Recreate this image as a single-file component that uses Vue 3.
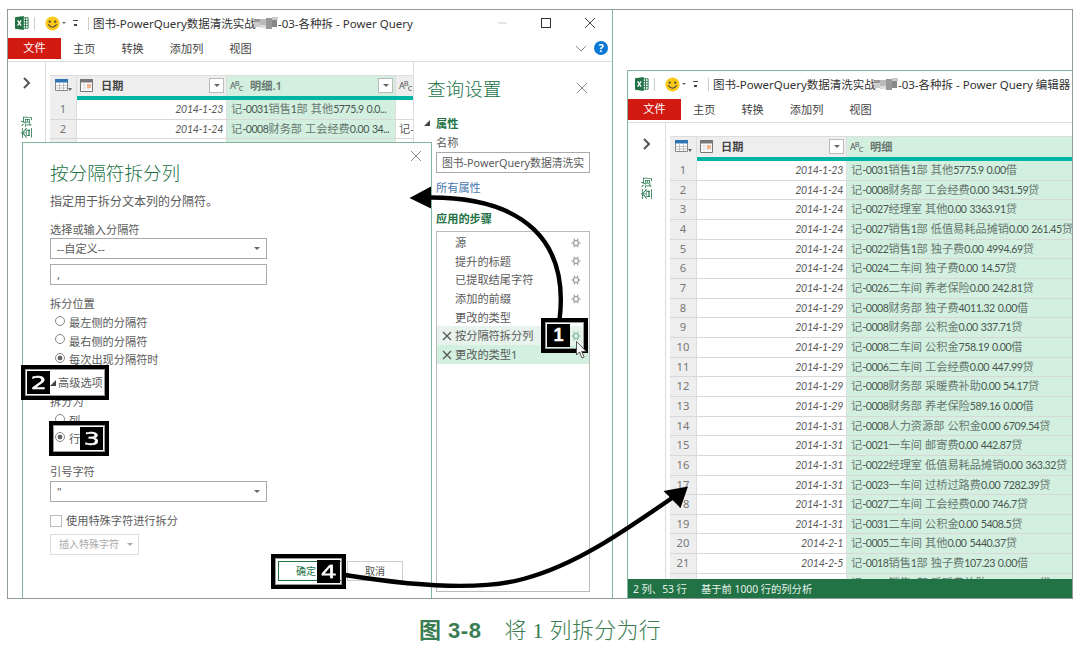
<template>
  <div class="figure">
    <div class="frame"></div>

    <section v-for="win in windows" :key="win.name" class="window" :class="win.name">
      <header class="titlebar">
        <svg class="excel" viewBox="0 0 16 16"><path d="M8 2h7v12H8z" fill="#fff" stroke="#217346" /><path d="M9 5h6M9 8h6M9 11h6M12 2v12" stroke="#217346" /><path d="M0 1.500 10 0v16L0 14.500z" fill="#217346" /><path d="m3 5 4 6M7 5l-4 6" stroke="#fff" stroke-width="1.500" /></svg>
        <i class="sep"></i>
        <svg class="smile" viewBox="0 0 16 16"><circle cx="8" cy="8" r="7.500" fill="#fcc916" /><circle cx="5" cy="6" r="1.200" fill="#444" /><circle cx="11" cy="6" r="1.200" fill="#444" /><path d="M3.500 9q4.500 6 9 0" fill="none" stroke="#444" stroke-width="1.200" /></svg>
        <i class="caret small"></i>
        <i class="quick"></i>
        <i class="sep last"></i>
        <span class="caption-text">图书-PowerQuery数据清洗实战</span>
        <svg class="mosaic" viewBox="0 0 24 12"><path d="M0 2h6v3H0z" fill="#999" /><path d="M6 2h6v6H6z" fill="#bbb" /><path d="M0 5h6v5H0zM18 0h6v3h-6z" fill="#ccc" /><path d="M12 1h6v11h-6z" fill="#999" /><path d="M18 3h5v7h-5z" fill="#888" /><path d="M6 8h6v3H6z" fill="#ddd" /></svg>
        <span class="caption-text tail">{{ win.tail }}</span>
        <svg v-if="win.settings" class="controls" viewBox="0 0 98 12"><path d="M0 6h9" stroke="#ccc" /><rect x="43.500" y="1.500" width="9" height="9" fill="none" stroke="#333" /><path d="m87 1 10 10M97 1 87 11" stroke="#444" /></svg>
      </header>
      <nav class="ribbon">
        <b>文件</b><span v-for="tab in tabs" :key="tab">{{ tab }}</span>
        <svg v-if="win.settings" class="help" viewBox="0 0 34 14"><path d="m1 5 5 5 5-5" fill="none" stroke="#888" /><circle cx="26" cy="7" r="7" fill="#0b78d7" /><text x="26" y="11" text-anchor="middle">?</text></svg>
      </nav>
      <div class="body">
        <aside class="rail"><svg viewBox="0 0 8 12"><path d="m1 1 5 5-5 5" fill="none" stroke="#555" stroke-width="2" /></svg><span>查询</span></aside>
        <div class="grid">
          <div class="row head">
            <span class="num"><svg class="table-icon" viewBox="0 0 17 14"><path d="M.5.500h12v11H.5z" fill="#fff" stroke="#888" /><path d="M0 0h13v3.500H0z" fill="#2f75b5" /><path d="M1 6.500h11M1 9h11M4.500 4v7M8.500 4v7" stroke="#aaa" stroke-width=".7" /><path d="M13 9h4l-2 3z" fill="#666" /></svg></span>
            <span class="date"><svg class="cal" viewBox="0 0 13 13"><path d="M.5.500h12v12H.5z" fill="#fff" stroke="#777" /><path d="M0 0h13v3.500H0z" fill="#777" /><path d="M1 6h11M1 9h11M4 4v8M8 4v8" stroke="#ccc" stroke-width=".6" /><path d="M7 5h4v4H7z" fill="#f2b58c" /></svg>日期<i class="drop"></i></span>
            <span class="text"><em class="abc">A<sup>B</sup><sub>C</sub></em>{{ win.column }}<i v-if="win.settings" class="drop"></i></span>
            <span v-if="win.settings" class="extra"><em class="abc">A<sup>B</sup><sub>C</sub></em></span>
          </div>
          <div class="quality"></div>
          <div v-for="(row, i) in win.rows" :key="i" class="row">
            <span class="num">{{ i < 21 ? i + 1 : "" }}</span>
            <span class="date">{{ row[0] }}</span>
            <span class="text"><template v-for="(part, k) in split(row[1])" :key="k"><em v-if="k % 2">{{ part }}</em><template v-else>{{ part }}</template></template></span>
            <span v-if="win.settings" class="extra">{{ row[2] }}</span>
          </div>
        </div>
        <aside v-if="win.settings" class="settings">
          <h2>查询设置<svg viewBox="0 0 12 12"><path d="m1 1 10 10M11 1 1 11" stroke="#888" /></svg></h2>
          <h3 class="props">属性</h3>
          <label>名称</label>
          <div class="name-box">图书-PowerQuery数据清洗实</div>
          <a>所有属性</a>
          <h3>应用的步骤</h3>
          <ul>
            <li v-for="(step, i) in steps" :key="step" :class="{ hover: i === 5, active: i === 6 }">
              <svg v-if="i > 4" class="remove" viewBox="0 0 10 10"><path d="m1 1 8 8M9 1 1 9" stroke="#555" stroke-width="1.300" /></svg>
              <span>{{ step }}</span>
              <svg v-if="i < 4 || i === 5" class="gear" viewBox="0 0 12 12"><circle cx="6" cy="6" r="3" /><path d="M4 .8v2.500M8 .8v2.500M4 8.700v2.500M8 8.700v2.500M.5 6H3M9 6h2.500" /></svg>
            </li>
          </ul>
        </aside>
      </div>
      <footer v-if="!win.settings" class="status"><span>2 列、53 行</span><span>基于前 1000 行的列分析</span></footer>
    </section>

    <section class="dialog">
      <svg class="close" viewBox="0 0 12 12"><path d="m1 1 10 10M11 1 1 11" stroke="#888" /></svg>
      <h1>按分隔符拆分列</h1>
      <p class="intro">指定用于拆分文本列的分隔符。</p>
      <label>选择或输入分隔符</label>
      <div class="field">--自定义--<i class="caret"></i></div>
      <div class="field second">,</div>
      <p class="line position">拆分位置</p>
      <p class="line option"><i class="radio"></i>最左侧的分隔符</p>
      <p class="line option"><i class="radio"></i>最右侧的分隔符</p>
      <p class="line option"><i class="radio on"></i>每次出现分隔符时</p>
      <p class="line advanced"><i class="tri"></i>高级选项</p>
      <p class="line">拆分为</p>
      <p class="line option"><i class="radio"></i>列</p>
      <p class="line option"><i class="radio on"></i>行</p>
      <p class="line quote">引号字符</p>
      <div class="field">"<i class="caret"></i></div>
      <p class="line special"><i class="check"></i>使用特殊字符进行拆分</p>
      <div class="insert">插入特殊字符<i class="caret"></i></div>
      <footer><button class="ok">确定</button><button>取消</button></footer>
    </section>

    <!-- arrows linking the numbered steps -->
    <svg class="arrows" viewBox="0 0 1080 648">
      <path class="stroke" d="M559.500 320C569 243 526 197 429 197.500M345 575C395 583 475 593 525 578.500C575 565 620 534 672 498" />
      <path d="M409.500 198 431 186.500V208.500zM688 486.500 663.500 491 680.500 508z" />
    </svg>
    <div v-for="n in 4" :key="n" class="callout" :class="'step' + n"><b><span>{{ n }}</span></b></div>
    <svg class="arrows" viewBox="0 0 1080 648"><path class="pointer" d="M576.500 341.500V355l3-3 2.500 6 2.200-1-2.500-5.500h4.500z" /></svg>

    <p class="figcaption"><b>图 3-8</b><span>将 1 列拆分为行</span></p>
  </div>
</template>

<script setup>
const tabs = ["主页", "转换", "添加列", "视图"];

const steps = ["源", "提升的标题", "已提取结尾字符", "添加的前缀", "更改的类型", "按分隔符拆分列", "更改的类型1"];

const leftRows = [
  ["2014-1-23", "记-0031销售1部 其他5775.9 0.0...", ""],
  ["2014-1-24", "记-0008财务部 工会经费0.00 34...", "记-"],
  ["2014-1-24", "记-0027经理室 其他0.00 3363...", ""],
];

const rows = [
  ["2014-1-23", "记-0031销售1部 其他5775.9 0.00借"],
  ["2014-1-24", "记-0008财务部 工会经费0.00 3431.59贷"],
  ["2014-1-24", "记-0027经理室 其他0.00 3363.91贷"],
  ["2014-1-24", "记-0027销售1部 低值易耗品摊销0.00 261.45贷"],
  ["2014-1-24", "记-0022销售1部 独子费0.00 4994.69贷"],
  ["2014-1-24", "记-0024二车间 独子费0.00 14.57贷"],
  ["2014-1-24", "记-0026二车间 养老保险0.00 242.81贷"],
  ["2014-1-29", "记-0008财务部 独子费4011.32 0.00借"],
  ["2014-1-29", "记-0008财务部 公积金0.00 337.71贷"],
  ["2014-1-29", "记-0008二车间 公积金758.19 0.00借"],
  ["2014-1-29", "记-0006二车间 工会经费0.00 447.99贷"],
  ["2014-1-29", "记-0008财务部 采暖费补助0.00 54.17贷"],
  ["2014-1-29", "记-0008财务部 养老保险589.16 0.00借"],
  ["2014-1-31", "记-0008人力资源部 公积金0.00 6709.54贷"],
  ["2014-1-31", "记-0021一车间 邮寄费0.00 442.87贷"],
  ["2014-1-31", "记-0022经理室 低值易耗品摊销0.00 363.32贷"],
  ["2014-1-31", "记-0023一车间 过桥过路费0.00 7282.39贷"],
  ["2014-1-31", "记-0027二车间 工会经费0.00 746.7贷"],
  ["2014-1-31", "记-0031二车间 公积金0.00 5408.5贷"],
  ["2014-2-1", "记-0005二车间 其他0.00 5440.37贷"],
  ["2014-2-5", "记-0018销售1部 独子费107.23 0.00借"],
  ["", "记-0018销售1部 采暖费补助0.00 354.17贷"],
];

const windows = [
  { name: "source", tail: "-03-各种拆 - Power Query", column: "明细.1", rows: leftRows, settings: true },
  { name: "result", tail: "-03-各种拆 - Power Query 编辑器", column: "明细", rows, settings: false },
];

// odd parts are the latin runs, set in a narrower face
const split = (text) => text.split(/([\x20-\x7e]+)/);
</script>

<style>
body {
  background: #fff;
}
</style>

<style scoped>
* {
  box-sizing: border-box;
}

.figure {
  position: relative;
  width: 1080px;
  height: 648px;
  overflow: hidden;
  background: #fff;
  color: #5a5a5a;
  font: 11.2px/19px "Noto Sans", "Noto Sans CJK SC", sans-serif;
  white-space: nowrap;
}

.frame {
  position: absolute;
  left: 7px;
  top: 9px;
  width: 1066px;
  height: 590px;
  border: 1px solid #8f9c97;
}

p, h1, h2, h3, ul {
  margin: 0;
  padding: 0;
  font-weight: 400;
}

svg {
  display: block;
  flex: none;
}

/* windows */
.window {
  position: absolute;
  display: flex;
  flex-direction: column;
  overflow: hidden;
  background: #fff;
}

.source {
  left: 8px;
  top: 10px;
  width: 605px;
  height: 588px;
  border-right: 1px solid #83b79d;
}

.result {
  left: 627px;
  top: 70px;
  width: 445px;
  height: 528px;
  border-left: 1px solid #83b79d;
  border-top: 1px solid #83b79d;
}

.titlebar {
  display: flex;
  align-items: center;
  flex: none;
  height: 28px;
  padding: 0 0 2px 6px;
  color: #333;
  font-size: 11.5px;
}

.excel {
  width: 16px;
  height: 14px;
}

.sep {
  width: 1px;
  height: 13px;
  margin-left: 4px;
  background: #ccc;
}

.sep.last {
  margin-left: 10px;
}

.smile {
  width: 15px;
  height: 15px;
  margin-left: 10px;
}

.caret {
  border: 3px solid transparent;
  border-top: 3px solid #666;
  border-bottom: 0;
}

.caret.small {
  margin-left: 2px;
  border-width: 2.5px 2.5px 0;
}

.quick {
  width: 5px;
  height: 6px;
  margin-left: 7px;
  border-top: 1px solid #444;
  background: linear-gradient(#444, #444) 50% 100% / 3px 2px no-repeat;
}

.caption-text {
  width: 161px;
  margin-left: 4px;
}

.mosaic {
  width: 24px;
  height: 12px;
  filter: blur(0.7px);
}

.caption-text.tail {
  width: auto;
  margin-left: 0;
}

.controls {
  width: 98px;
  height: 12px;
  margin-left: auto;
  margin-right: 16px;
}

.ribbon {
  display: flex;
  flex: none;
  gap: 26px;
  height: 24px;
  border-bottom: 1px solid #ddd;
  color: #444;
  line-height: 21px;
}

.ribbon b {
  width: 53px;
  height: 21px;
  margin-right: -14px;
  background: #d01a12;
  color: #fff;
  font-weight: 400;
  line-height: 20px;
  text-align: center;
}

.help {
  width: 34px;
  height: 14px;
  margin: 3px 3px 0 auto;
}

.help text {
  fill: #fff;
  font: bold 11px "Noto Sans", sans-serif;
}

.body {
  display: flex;
  flex: 1;
  min-height: 0;
}

.rail {
  display: flex;
  flex-direction: column;
  align-items: center;
  flex: none;
  gap: 27px;
  width: 38px;
  padding-top: 15px;
  border-right: 1px solid #ddd;
}

.rail svg {
  width: 8px;
  height: 12px;
}

.rail span {
  color: #217346;
  transform: rotate(180deg);
  writing-mode: vertical-rl;
  text-orientation: sideways;
}

/* data preview */
.grid {
  flex: 1;
  min-width: 0;
  margin-left: 4px;
  padding-top: 13px;
  overflow: hidden;
}

.row {
  display: flex;
  height: 19.67px;
  line-height: 18px;
}

.row > span {
  flex: none;
  border-right: 1px solid #ddd;
  border-bottom: 1px solid #d8d8d8;
  overflow: hidden;
}

.row .num {
  width: 27px;
  background: #eee;
  color: #777;
  text-align: center;
}

.row .date {
  width: 150px;
  padding-right: 3px;
  font-family: Lato, "Noto Sans CJK SC", sans-serif;
  font-size: 10.6px;
  font-style: italic;
  letter-spacing: -0.3px;
  text-align: right;
}

.row .text {
  width: 169px;
  padding-left: 4px;
  background: #d2efdf;
  color: #68776f;
}

.text em {
  color: #4a5750;
  font-family: Lato, sans-serif;
  font-size: 10.6px;
  font-style: normal;
  letter-spacing: -0.45px;
  word-spacing: 0.7px;
}

.result .row .text {
  width: 226px;
}

.row .extra {
  width: 20px;
  padding-left: 3px;
}

.row.head {
  height: 21px;
  border-top: 1px solid #ddd;
  background: #eee;
  color: #444;
  font-weight: 600;
}

.row.head > span {
  display: flex;
  align-items: center;
  padding: 0 2px 1px 3px;
  border-bottom: 0;
  font-size: 11.2px;
  font-style: normal;
  letter-spacing: 0;
}

.table-icon {
  width: 17px;
  height: 14px;
  margin-left: 2px;
}

.cal {
  width: 13px;
  height: 13px;
  margin-right: 8px;
}

.drop {
  width: 15px;
  height: 15px;
  margin-left: auto;
  border: 1px solid #bbb;
  background: #fff;
}

.drop::after {
  content: "";
  display: block;
  width: 0;
  margin: 5px 0 0 3.5px;
  border: 3px solid transparent;
  border-top-color: #666;
  border-bottom: 0;
}

.head .abc {
  display: inline-flex;
  flex: none;
  width: 20px;
  height: 16px;
  color: #555;
  font: 9px/16px "Noto Sans", sans-serif;
  letter-spacing: -0.9px;
}

.abc sup,
.abc sub {
  font-size: 7.5px;
  line-height: 11px;
}

.abc sub {
  line-height: 20px;
}

.quality {
  height: 4px;
  background: linear-gradient(90deg, #eee 27px, #00b5a3 27px);
}

.status {
  display: flex;
  flex: none;
  gap: 14px;
  height: 19px;
  padding-left: 5px;
  background: #217346;
  color: #e8f2ec;
  font-size: 10.3px;
  line-height: 21px;
}

/* query settings */
.settings {
  flex: none;
  width: 199px;
  padding: 10px 23px 5px 22px;
  border-left: 1px solid #ddd;
  background: #fff;
}

.settings h2 {
  display: flex;
  align-items: center;
  justify-content: space-between;
  height: 32px;
  margin-left: -9px;
  color: #217346;
  font-size: 18.6px;
  font-weight: 300;
}

.settings h2 svg {
  width: 12px;
  height: 12px;
  margin-right: 1px;
}

.settings h3 {
  color: #217346;
  font-size: 11.2px;
  font-weight: 700;
}

.settings .props {
  margin-top: 10px;
}

.props::before {
  content: "";
  float: left;
  margin: 6px 0 0 -12px;
  border-left: 6px solid transparent;
  border-bottom: 6px solid #444;
}

.settings label {
  display: block;
  height: 19px;
}

.name-box {
  width: 154px;
  height: 21px;
  padding-left: 5px;
  border: 1px solid #aaa;
  overflow: hidden;
  font-size: 10.8px;
  line-height: 20px;
}

.settings a {
  display: block;
  margin: 5px 0 12px;
  color: #4777ad;
}

.settings ul {
  width: 154px;
  height: 361px;
  margin-top: 3px;
  padding-top: 1px;
  border: 1px solid #bbb;
  list-style: none;
}

li {
  display: grid;
  grid-template-columns: 18px 1fr 18px;
  align-items: center;
  height: 18.7px;
}

li span {
  grid-column: 2;
  grid-row: 1;
}

li.hover {
  background: #e8f3ed;
}

li.active {
  background: #d2efdf;
}

.remove {
  width: 10px;
  height: 10px;
  margin-left: 5px;
}

.gear {
  grid-column: 3;
  width: 10px;
  height: 10px;
  fill: none;
  stroke: #999;
  stroke-width: 1.4;
}

.hover .gear {
  stroke: #7fb8a0;
}

/* split column dialog */
.dialog {
  position: absolute;
  left: 22px;
  top: 142px;
  width: 410px;
  height: 456px;
  padding: 17px 27px 0;
  border: 1px solid #83b79d;
  border-bottom: 0;
  background: #fff;
}

.close {
  position: absolute;
  top: 7px;
  right: 9px;
  width: 12px;
  height: 12px;
}

.dialog h1 {
  height: 28px;
  color: #217346;
  font-size: 18.6px;
  font-weight: 300;
  line-height: 26px;
}

.intro {
  height: 28px;
  font-size: 12px;
  line-height: 28px;
}

.dialog label {
  display: block;
  height: 22px;
  padding-top: 4px;
}

.field {
  display: flex;
  align-items: center;
  justify-content: space-between;
  width: 217px;
  height: 21px;
  padding: 0 6px;
  border: 1px solid #aaa;
}

.second {
  margin-top: 5px;
}

.line {
  display: flex;
  align-items: center;
  height: 18.8px;
}

.position {
  margin-top: 9px;
}

.option {
  padding-left: 5px;
}

.radio {
  width: 10px;
  height: 10px;
  margin: -3px 4px 0 0;
  border: 1px solid #888;
  border-radius: 50%;
}

.radio.on {
  background: radial-gradient(#666 2.1px, transparent 2.7px);
}

.advanced {
  margin-top: 4px;
}

.tri {
  margin-right: 2px;
  border-left: 6px solid transparent;
  border-bottom: 6px solid #444;
}

.quote {
  margin-top: 14px;
}

.special {
  margin-top: 9px;
}

.check {
  width: 12px;
  height: 12px;
  margin-right: 4px;
  border: 1px solid #bbb;
}

.insert {
  display: flex;
  align-items: center;
  gap: 8px;
  width: 89px;
  height: 21px;
  margin-top: 4px;
  padding-left: 8px;
  border: 1px solid #ddd;
  color: #aaa;
  font-size: 10px;
}

.insert .caret {
  border-top-color: #aaa;
}

.dialog footer {
  display: flex;
  gap: 2px;
  margin: 6px 0 0 228px;
}

button {
  width: 56px;
  height: 20px;
  padding: 0;
  border: 1px solid #ccc;
  background: #fff;
  color: #505050;
  font: 10px "Noto Sans CJK SC", sans-serif;
}

button.ok {
  width: 67px;
  padding-right: 11px;
  border-color: #217346;
  color: #217346;
}

/* numbered callouts */
.arrows {
  position: absolute;
  left: 0;
  top: 0;
  width: 1080px;
  height: 648px;
}

.arrows .stroke {
  fill: none;
  stroke: #000;
  stroke-width: 4.4;
}

.arrows .pointer {
  fill: #fff;
  stroke: #444;
  stroke-width: 0.9;
}

.callout {
  position: absolute;
  display: flex;
  height: 35px;
  padding: 1px;
  border: 4px solid #000;
  outline: 1px solid #999;
  outline-offset: -5px;
}

.callout b {
  display: flex;
  align-items: center;
  justify-content: center;
  width: 23px;
  height: 23px;
  margin: 1px;
  background: #000;
  color: #fff;
  font: 400 18px "DejaVu Sans", sans-serif;
  -webkit-text-stroke: 0.4px #fff;
}

.callout span {
  transform: scaleX(1.4);
}

.callout.step1 span {
  font-family: "Liberation Sans", sans-serif;
  font-weight: 700;
  transform: none;
}

.step1 {
  left: 541px;
  top: 318px;
  width: 47px;
}

.step2 {
  left: 21px;
  top: 365px;
  width: 88px;
}

.step3 {
  left: 49px;
  top: 421px;
  width: 60px;
}

.step4 {
  left: 271px;
  top: 554px;
  width: 75px;
}

.step3,
.step4 {
  justify-content: flex-end;
}

.figcaption {
  position: absolute;
  left: 419px;
  top: 616px;
  display: flex;
  gap: 23px;
  color: #3a7d52;
  font: 22px/30px "Liberation Sans", "Noto Sans CJK SC", sans-serif;
}

.figcaption b {
  letter-spacing: 0.5px;
}

.figcaption span {
  font-family: "Liberation Serif", "Noto Sans CJK SC", serif;
  font-weight: 300;
  letter-spacing: 0.3px;
}
</style>
